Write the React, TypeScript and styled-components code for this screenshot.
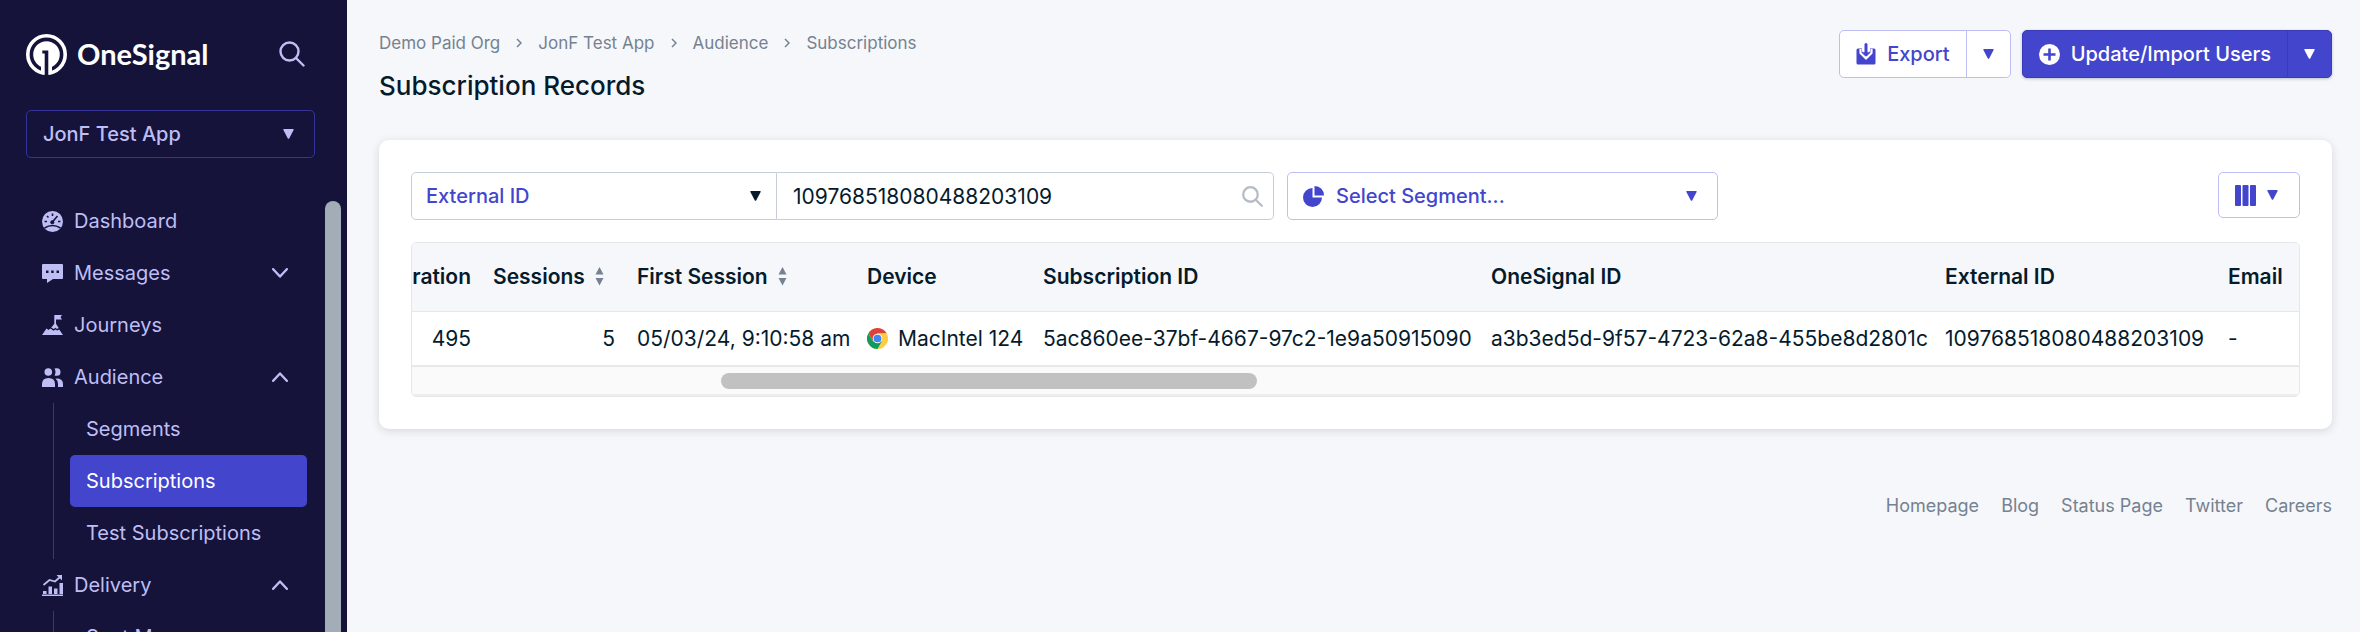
import React from 'react';
import styled, { createGlobalStyle, css } from 'styled-components';

const Global = createGlobalStyle`
  *, *::before, *::after { box-sizing: border-box; }
  body { margin: 0; background: #f6f7fa; font-family: Inter, "Liberation Sans", sans-serif; color: #051b2c; }
  button, select, input { font: inherit; color: inherit; margin: 0; }
  ul { list-style: none; margin: 0; padding: 0; }
  a { color: inherit; text-decoration: none; }
  svg { display: block; flex-shrink: 0; }
`;

const Page = styled.div`display: flex; height: 100vh; overflow: hidden;`;

const Sidebar = styled.aside`
  flex: 0 0 347px; display: flex; flex-direction: column;
  background: #15133a; color: #bebef5; overflow: hidden;
`;
const Brand = styled.div`
  display: flex; align-items: center; justify-content: space-between;
  height: 42px; margin: 33px 42px 0 26px;
`;
const BrandLink = styled.a`display: flex; align-items: center; gap: 10px; color: #fff;`;
const BrandName = styled.span`font: 700 29px/42px Lato, sans-serif;`;
const IconButton = styled.button`display: flex; padding: 0; border: 0; background: none; color: inherit;`;

const SelectBox = styled.div`position: relative; display: flex; align-items: center;`;
const Select = styled.select`
  appearance: none; width: 100%; height: 48px; border: 1px solid; border-radius: 5px;
  background: transparent; outline: none; font-size: 20px; font-weight: 500;
`;
const SelectArrow = styled.span`position: absolute; right: 16px; display: flex; pointer-events: none;`;
const AppPicker = styled(SelectBox)`
  margin: 35px 32px 0 26px;
  ${Select} { border-color: #34349a; padding: 0 40px 0 16px; }
  ${SelectArrow} { right: 21px; }
`;

const NavArea = styled.div`flex: 1; min-height: 0; display: flex; margin-top: 37px; overflow: hidden;`;
const Nav = styled.nav`flex: 1; font-size: 20px;`;
const NavLink = styled.a`
  display: flex; align-items: center; gap: 11px; height: 52px; padding: 0 19px 0 42px; margin-right: 18px;
`;
const NavText = styled.span`flex: 1;`;
const SubList = styled.ul`margin: 0 18px 0 53px; padding-left: 16px; border-left: 1px solid #34349a;`;
const SubLink = styled.a<{ $active?: boolean }>`
  display: flex; align-items: center; height: 52px; padding-left: 16px; border-radius: 5px;
  ${p => p.$active && css`background: #4345cd; color: #fff;`}
`;
const NavThumb = styled.div`width: 16px; margin: 6px 6px 0 0; border-radius: 8px 8px 0 0; background: #a3adb8;`;

const Main = styled.main`flex: 1; min-width: 0; padding: 30px 28px 0 32px;`;
const Header = styled.header`display: flex; justify-content: space-between; align-items: flex-start;`;
const Crumbs = styled.ol`
  display: flex; align-items: center; gap: 16px; list-style: none; margin: 0; padding: 0;
  font-size: 17px; line-height: 26px; color: #748291;
`;
const Title = styled.h1`margin: 10px 0 0; font-size: 26px; line-height: 40px; font-weight: 500;`;
const Actions = styled.div`display: flex; gap: 11px;`;
const Split = styled.div<{ $primary?: boolean }>`
  display: flex; height: 48px; border: 1px solid; border-radius: 5px; overflow: hidden;
  ${p => p.$primary
    ? css`background: #4345cd; color: #fff; border-color: #3a3bb8; box-shadow: 0 1px 3px #051b2c40;`
    : css`background: #fff; color: #4345cd; border-color: #bebef5;`}
`;
const SplitMain = styled.button`
  display: flex; align-items: center; gap: 11px; padding: 0 16px; border: 0; background: none;
  font-size: 20px; font-weight: 500; white-space: nowrap;
`;
const SplitMore = styled.button<{ $primary?: boolean }>`
  display: flex; align-items: center; padding: 0 16px; border: 0; background: none;
  border-left: 1px solid ${p => (p.$primary ? '#3a3bb8' : '#bebef5')};
`;

const Card = styled.section`
  margin-top: 34px; padding: 32px; border-radius: 10px; background: #fff;
  box-shadow: 0 2px 10px #051b2c24;
`;
const Filters = styled.div`display: flex; align-items: flex-start; gap: 13px;`;
const SearchGroup = styled.div`display: flex; flex: 0 1 863px;`;
const FieldSelect = styled(SelectBox)`
  flex: 0 0 366px;
  ${Select} { border-color: #c9cdd6; border-radius: 5px 0 0 5px; padding: 0 40px 0 14px; color: #4345cd; }
`;
const SearchField = styled.div`
  flex: 1; display: flex; align-items: center; padding: 0 10px 0 16px; height: 48px;
  border: 1px solid #c9cdd6; border-left: 0; border-radius: 0 5px 5px 0; color: #b4bcc6;
`;
const SearchInput = styled.input`
  flex: 1; min-width: 0; padding: 0; border: 0; outline: none; background: none; color: #051b2c; font-size: 21px;
`;
const SegmentSelect = styled(SelectBox)`
  flex: 0 1 431px; color: #4345cd;
  ${Select} { border-color: #bebef5; padding: 0 40px 0 48px; }
  ${SelectArrow} { right: 21px; }
`;
const SegmentIcon = styled.span`position: absolute; left: 16px; display: flex; pointer-events: none;`;
const ColumnsButton = styled.button`
  display: flex; align-items: center; justify-content: space-between; width: 82px; height: 46px;
  margin-left: auto; padding: 0 21px 0 16px; border: 1px solid #bebef5; border-radius: 5px;
  background: #fff; color: #4345cd;
`;

const TableFrame = styled.div`margin-top: 22px; border: 1px solid #e5e7e9; border-radius: 5px; overflow: hidden;`;
const Table = styled.table`
  width: 100%; table-layout: fixed; border-collapse: separate; border-spacing: 0;
  font-size: 21px; line-height: 26px; white-space: nowrap; text-align: left;
`;
const Col = styled.col<{ $w?: number }>`width: ${p => (p.$w ? p.$w + 'px' : 'auto')};`;
const Th = styled.th`height: 69px; padding: 0 11px; background: #f6f7fa; border-bottom: 1px solid #e5e7e9; font-weight: 600;`;
const Td = styled.td<{ $right?: boolean }>`
  height: 55px; padding: 0 11px; border-bottom: 2px solid #e8e8e8; text-align: ${p => (p.$right ? 'right' : 'left')};
`;
const Inline = styled.span<{ $end?: boolean }>`
  display: flex; align-items: center; gap: 10px; justify-content: ${p => (p.$end ? 'flex-end' : 'flex-start')};
`;
const Track = styled.div`height: 29px; padding: 6px 0; background: #fafafa; border-bottom: 2px solid #ededed;`;
const Thumb = styled.div`width: 28.4%; height: 16px; margin-left: 16.4%; border-radius: 8px; background: #c1c1c1;`;

const Footer = styled.footer`
  display: flex; justify-content: flex-end; gap: 22px; margin-top: 64px;
  font-size: 18px; line-height: 26px; color: #748291;
`;

const Arrow = () => (
  <svg width="11" height="10" viewBox="0 0 11 10" fill="currentColor" aria-hidden="true"><path d="M1 0h9q1 0 .6 1L6.300 9.200q-.8 1.200-1.600 0L.4 1Q0 0 1 0z" /></svg>
);
const SortIcon = () => (
  <svg width="9" height="20" viewBox="0 0 9 20" fill="#748291" aria-hidden="true"><path d="M4.500 0L8.500 7.500H.5zM.5 11h8l-4 7.500z" /></svg>
);
const Chevron = ({ up }: { up?: boolean }) => (
  <svg width="16" height="10" viewBox="0 0 16 10" fill="none" stroke="currentColor" strokeWidth="2.400" strokeLinecap="round" strokeLinejoin="round" aria-hidden="true">
    <path d={up ? 'M1.200 8.800L8 1.500l6.800 7.300' : 'M1.200 1.200L8 8.500l6.800-7.300'} />
  </svg>
);
const CrumbArrow = () => (
  <svg width="6" height="10" viewBox="0 0 6 10" fill="none" stroke="currentColor" strokeWidth="1.500" aria-hidden="true"><path d="M1 1l4 4-4 4" /></svg>
);
const SearchIcon = ({ size, weight }: { size: number; weight: number }) => (
  <svg width={size} height={size} viewBox="0 0 26 26" fill="none" stroke="currentColor" strokeWidth={weight} strokeLinecap="round" aria-hidden="true">
    <circle cx="10.500" cy="10.500" r="9" /><path d="M17 17l7.500 7.500" />
  </svg>
);
const LogoMark = () => (
  <svg width="41" height="41" viewBox="0 0 41 41" aria-hidden="true">
    <circle cx="20.500" cy="20.500" r="18.700" fill="none" stroke="#fff" strokeWidth="3.600" />
    <circle cx="20.500" cy="20.500" r="13.300" fill="#fff" />
    <path d="M15 30h11v9H15z" fill="#fff" />
    <path d="M16.300 16.500h6V41h-3.600V19.500h-2.400z" fill="#15133a" />
  </svg>
);
const DashboardIcon = () => (
  <svg width="21" height="21" viewBox="0 0 21 21" aria-hidden="true">
    <circle cx="10.500" cy="10.500" r="10.500" fill="currentColor" />
    <path d="M2.500 17q8-5 16 0" stroke="#15133a" strokeWidth="1.500" fill="none" />
    <path d="M10.500 2.500v2.500M2.500 10.500H5M16 10.500h2.500M5 5l1.500 1.500M10 11.500L15.500 5" stroke="#15133a" strokeWidth="1.600" />
    <circle cx="10.300" cy="11.300" r="2" fill="#15133a" />
  </svg>
);
const MessageIcon = () => (
  <svg width="21" height="21" viewBox="0 0 21 21" aria-hidden="true">
    <path d="M1 1h19q1 0 1 1v13q0 1-1 1h-9l-6 4v-4H1q-1 0-1-1V2q0-1 1-1z" fill="currentColor" />
    <path d="M4 7.500h2.500v2.500H4zM9.200 7.500h2.500v2.500H9.200zM14.500 7.500H17v2.500h-2.500z" fill="#15133a" />
  </svg>
);
const JourneyIcon = () => (
  <svg width="21" height="21" viewBox="0 0 21 21" fill="currentColor" aria-hidden="true">
    <path d="M12.300 0h7.700l-1.500 2.300L20 4.600h-6v4.200l2.700 4.200-1.700 1-1.600-1.300L12 14l-2.800-1.300 3.100-4z" />
    <path d="M0 20l4.500-6.500L6.500 15l2-1.500 3 2.200 2-1.300 1.700 1 2-1L21 20z" />
  </svg>
);
const PeopleIcon = () => (
  <svg width="21" height="21" viewBox="0 0 21 21" fill="currentColor" aria-hidden="true">
    <circle cx="6.300" cy="5" r="3.800" /><path d="M0 20v-3q0-6 6.500-6t6.500 6v3z" />
    <path d="M12.500 1.500q6-1.500 6 3.500t-6 3.500q2-3.500 0-7zM13.500 11.500Q21 11 21 17v3h-5v-3q0-3.500-2.500-5.500z" />
  </svg>
);
const DeliveryIcon = () => (
  <svg width="21" height="21" viewBox="0 0 21 21" fill="currentColor" aria-hidden="true">
    <path d="M0 19.500h21V21H0zM1 16h3.500v3H1zM6.500 11.500h3.500v7.500H6.500zM12 13.500h3.500V19H12zM17.500 8H21v11h-3.500z" />
    <path d="M1.500 10l6-5 5.500 1.500 5-4.500" stroke="currentColor" strokeWidth="1.800" fill="none" /><path d="M14.500 0H20v5.500z" />
  </svg>
);
const ExportIcon = () => (
  <svg width="20" height="22" viewBox="0 0 20 22" aria-hidden="true">
    <path d="M2 5.500h4V8L10 15l4-7V5.500h4q1.500 0 1.500 1.500v13q0 1.500-1.500 1.500H2Q.5 21.500.5 20V7Q.5 5.500 2 5.500z" fill="currentColor" />
    <path d="M4.500 6v4l5.500 5.500 5.500-5.500V6" fill="none" stroke="#fff" strokeWidth="2.200" strokeLinejoin="round" />
    <path d="M10 1.500v10" stroke="currentColor" strokeWidth="3" strokeLinecap="round" /><path d="M5.800 9.200h8.400L10 13.600z" fill="currentColor" />
  </svg>
);
const PlusIcon = () => (
  <svg width="21" height="21" viewBox="0 0 21 21" aria-hidden="true">
    <circle cx="10.500" cy="10.500" r="10.500" fill="#fff" /><path d="M10.500 4.500v12M4.500 10.500h12" stroke="#4345cd" strokeWidth="2.600" />
  </svg>
);
const PieIcon = () => (
  <svg width="21" height="21" viewBox="0 0 21 21" fill="currentColor" aria-hidden="true">
    <path d="M9.500 2v9.500H19A9.500 9.500 0 1 1 9.500 2z" /><path d="M11.500 0Q20.500.5 21 9.500h-9.500z" />
  </svg>
);
const ColumnsIcon = () => (
  <svg width="21" height="21" viewBox="0 0 21 21" fill="currentColor" aria-hidden="true">
    <rect width="6" height="21" rx="1" /><rect x="7.500" width="6" height="21" rx="1" /><rect x="15" width="6" height="21" rx="1" />
  </svg>
);
const ChromeIcon = () => (
  <svg width="21" height="21" viewBox="0 0 48 48" aria-hidden="true">
    <path d="M24 12h20.800A24 24 0 0 1 24 48l10.400-18z" fill="#ffcd40" />
    <path d="M3.200 12L13.600 30 24 24V12h20.800A24 24 0 0 0 3.200 12z" fill="#db4437" />
    <path d="M3.200 12A24 24 0 0 0 24 48l10.400-18H13.600z" fill="#0f9d58" />
    <circle cx="24" cy="24" r="11" fill="#f1f1f1" /><circle cx="24" cy="24" r="8.800" fill="#4285f4" />
  </svg>
);

const crumbs = ['Demo Paid Org', 'JonF Test App', 'Audience', 'Subscriptions'];
const nav = [
  { label: 'Dashboard', Icon: DashboardIcon },
  { label: 'Messages', Icon: MessageIcon, open: false },
  { label: 'Journeys', Icon: JourneyIcon },
  { label: 'Audience', Icon: PeopleIcon, open: true, children: ['Segments', 'Subscriptions', 'Test Subscriptions'] },
  { label: 'Delivery', Icon: DeliveryIcon, open: true, children: ['Sent Messages'] },
];
const footer = ['Homepage', 'Blog', 'Status Page', 'Twitter', 'Careers'];
const colWidths = [70, 144, 230, 176, 448, 454, 283, undefined];

export default function App() {
  return (
    <Page>
      <Global />
      <Sidebar>
        <Brand>
          <BrandLink href="#"><LogoMark /><BrandName>OneSignal</BrandName></BrandLink>
          <IconButton aria-label="Search"><SearchIcon size={26} weight={2.400} /></IconButton>
        </Brand>
        <AppPicker>
          <Select aria-label="App"><option>JonF Test App</option></Select>
          <SelectArrow><Arrow /></SelectArrow>
        </AppPicker>
        <NavArea>
          <Nav>
            <ul>
              {nav.map(({ label, Icon, open, children }) => (
                <li key={label}>
                  <NavLink href="#"><Icon /><NavText>{label}</NavText>{open !== undefined && <Chevron up={open} />}</NavLink>
                  {children && (
                    <SubList>
                      {children.map(c => <li key={c}><SubLink href="#" $active={c === 'Subscriptions'}>{c}</SubLink></li>)}
                    </SubList>
                  )}
                </li>
              ))}
            </ul>
          </Nav>
          <NavThumb />
        </NavArea>
      </Sidebar>
      <Main>
        <Header>
          <div>
            <Crumbs>
              {crumbs.map((c, i) => (
                <React.Fragment key={c}>{i > 0 && <li aria-hidden="true"><CrumbArrow /></li>}<li><a href="#">{c}</a></li></React.Fragment>
              ))}
            </Crumbs>
            <Title>Subscription Records</Title>
          </div>
          <Actions>
            <Split>
              <SplitMain><ExportIcon />Export</SplitMain>
              <SplitMore aria-label="More export options"><Arrow /></SplitMore>
            </Split>
            <Split $primary>
              <SplitMain><PlusIcon />Update/Import Users</SplitMain>
              <SplitMore $primary aria-label="More import options"><Arrow /></SplitMore>
            </Split>
          </Actions>
        </Header>
        <Card>
          <Filters>
            <SearchGroup>
              <FieldSelect>
                <Select aria-label="Search field"><option>External ID</option></Select>
                <SelectArrow><Arrow /></SelectArrow>
              </FieldSelect>
              <SearchField>
                <SearchInput aria-label="Search value" defaultValue="109768518080488203109" />
                <SearchIcon size={21} weight={2.800} />
              </SearchField>
            </SearchGroup>
            <SegmentSelect>
              <SegmentIcon><PieIcon /></SegmentIcon>
              <Select aria-label="Segment"><option>Select Segment...</option></Select>
              <SelectArrow><Arrow /></SelectArrow>
            </SegmentSelect>
            <ColumnsButton aria-label="Columns"><ColumnsIcon /><Arrow /></ColumnsButton>
          </Filters>
          <TableFrame>
            <Table>
              <colgroup>{colWidths.map((w, i) => <Col key={i} $w={w} />)}</colgroup>
              <thead>
                <tr>
                  <Th><Inline $end>Duration</Inline></Th>
                  <Th><Inline>Sessions<SortIcon /></Inline></Th>
                  <Th><Inline>First Session<SortIcon /></Inline></Th>
                  <Th>Device</Th>
                  <Th>Subscription ID</Th>
                  <Th>OneSignal ID</Th>
                  <Th>External ID</Th>
                  <Th>Email</Th>
                </tr>
              </thead>
              <tbody>
                <tr>
                  <Td $right>495</Td>
                  <Td $right>5</Td>
                  <Td>05/03/24, 9:10:58 am</Td>
                  <Td><Inline><ChromeIcon />MacIntel 124</Inline></Td>
                  <Td>5ac860ee-37bf-4667-97c2-1e9a50915090</Td>
                  <Td>a3b3ed5d-9f57-4723-62a8-455be8d2801c</Td>
                  <Td>109768518080488203109</Td>
                  <Td>-</Td>
                </tr>
              </tbody>
            </Table>
            <Track><Thumb /></Track>
          </TableFrame>
        </Card>
        <Footer>{footer.map(f => <a key={f} href="#">{f}</a>)}</Footer>
      </Main>
    </Page>
  );
}
